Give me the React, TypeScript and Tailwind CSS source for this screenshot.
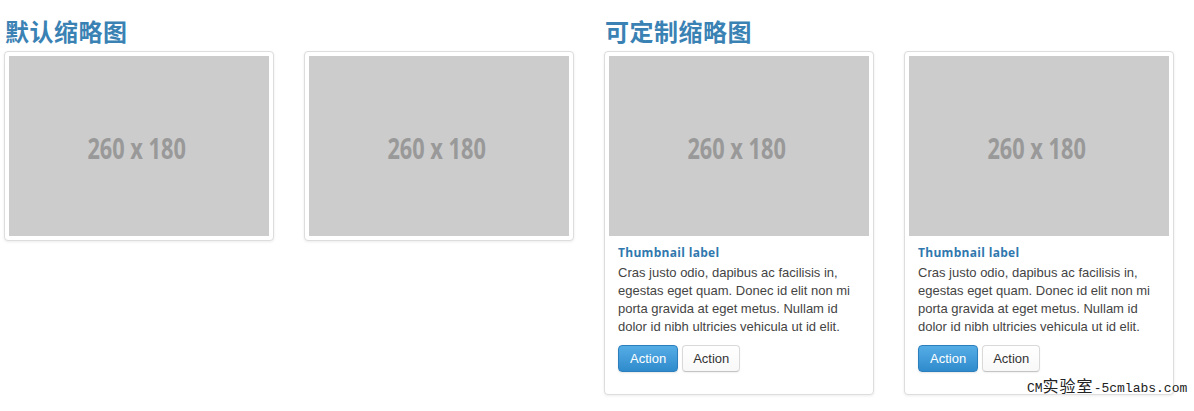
const captions = [
  "Cras justo odio, dapibus ac facilisis in, egestas eget quam. Donec id elit non mi porta gravida at eget metus. Nullam id dolor id nibh ultricies vehicula ut id elit.",
  "Cras justo odio, dapibus ac facilisis in, egestas eget quam. Donec id elit non mi porta gravida at eget metus. Nullam id dolor id nibh ultricies vehicula ut id elit.",
];

function Placeholder() {
  return (
    <div className="flex h-[180px] w-[260px] items-center justify-center bg-[#cccccc] pt-[4px] pr-[5px]">
      <span className="inline-block scale-x-[0.75] font-['Open_Sans',sans-serif] text-[29px] font-bold text-[#999999]">
        260 x 180
      </span>
    </div>
  );
}

function Heading({ children }: { children: string }) {
  return (
    <h3 className="mb-[5px] pl-px font-['Noto_Sans_CJK_SC',sans-serif] text-[24px] font-bold leading-[30px] tracking-[0.5px] text-[#3a82b4]">
      {children}
    </h3>
  );
}

function Thumb({ children }: { children?: React.ReactNode }) {
  return (
    <div className="w-[270px] rounded-[4px] border border-[#dddddd] bg-white p-1 shadow-[0_1px_3px_rgba(0,0,0,0.08)]">
      <Placeholder />
      {children}
    </div>
  );
}

export default function App() {
  return (
    <div className="relative h-[411px] w-[1194px] bg-white pl-1 pt-4 font-['Liberation_Sans',Arial,sans-serif]">
      <div className="flex gap-[30px]">
        <div className="w-[570px]">
          <Heading>默认缩略图</Heading>
          <div className="flex gap-[30px]">
            <Thumb />
            <Thumb />
          </div>
        </div>
        <div className="w-[570px]">
          <Heading>可定制缩略图</Heading>
          <div className="flex items-start gap-[30px]">
            {captions.map((text, i) => (
              <Thumb key={i}>
                <div className="px-[9px] pb-[9px] pt-[9px]">
                  <h5 className="font-['Open_Sans',sans-serif] text-[12px] font-bold leading-[16px] tracking-[0.3px] text-[#2f78ae]">
                    Thumbnail label
                  </h5>
                  <p className="mt-[3px] text-[13px] leading-[18px] text-[#444444]">{text}</p>
                  <div className="mb-[9px] mt-[9px] flex gap-1">
                    <button className="h-[27px] rounded-[4px] border border-[#2b7fbd] bg-gradient-to-b from-[#55ade6] to-[#2f8bcc] px-[11px] text-[13px] text-white shadow-[0_1px_2px_rgba(0,0,0,0.1)]">
                      Action
                    </button>
                    <button className="h-[27px] rounded-[4px] border border-[#d9d9d9] border-b-[#c4c4c4] bg-gradient-to-b from-white to-[#f8f8f8] px-[10px] text-[13px] text-[#333333] shadow-[0_1px_2px_rgba(0,0,0,0.06)]">
                      Action
                    </button>
                  </div>
                </div>
              </Thumb>
            ))}
          </div>
        </div>
      </div>
      <div className="absolute left-[1027px] top-[376px] font-['Liberation_Mono','Noto_Sans_CJK_SC',monospace] text-[13px] leading-[18px] text-[#222222]">
        CM<span className="text-[16px] font-['Noto_Sans_CJK_SC',monospace] tracking-[1px]">实验室</span>-5cmlabs.com
      </div>
    </div>
  );
}
